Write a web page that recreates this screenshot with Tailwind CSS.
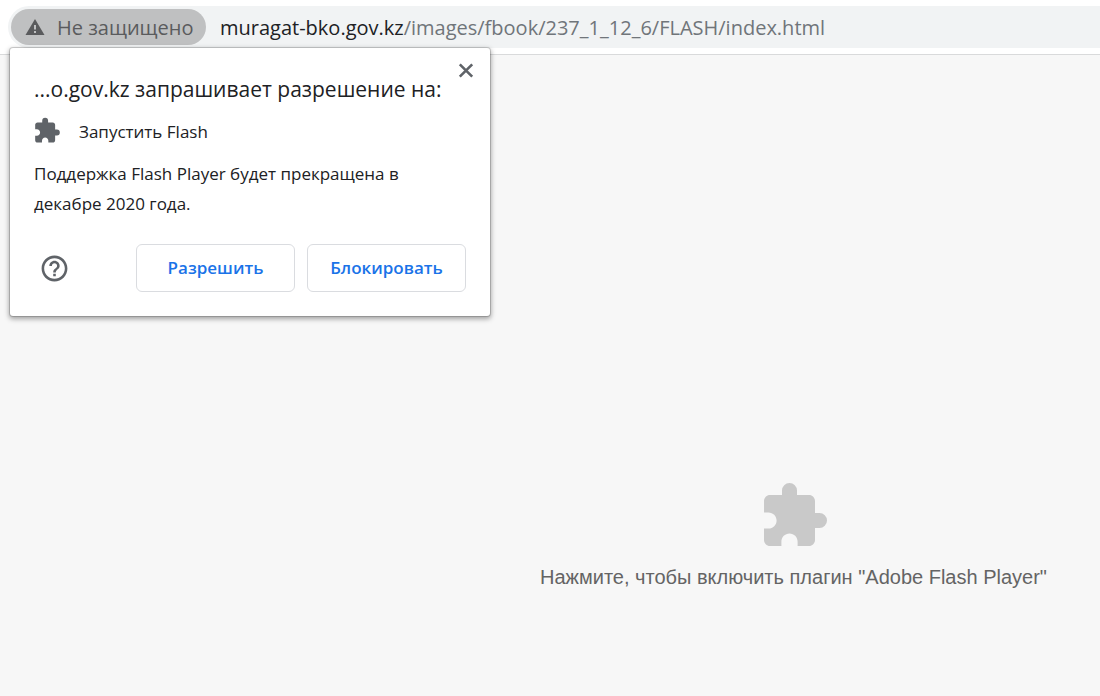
<!DOCTYPE html>
<html lang="ru">
<head>
  <meta charset="UTF-8">
  <meta name="viewport" content="width=device-width, initial-scale=1.0">
  <title>muragat-bko.gov.kz</title>
  <script src="https://cdn.jsdelivr.net/npm/@tailwindcss/browser@4"></script>
</head>
<body class="min-h-screen flex flex-col bg-[#f7f7f7] font-['Open_Sans','Noto_Sans',sans-serif] text-[#202124]">

  <!-- Address bar -->
  <header class="relative bg-white border-b border-[#d9dadb] pt-[6px] pb-[6px] pl-2">
    <div class="flex items-center h-[42px] pl-[3px] rounded-l-full bg-[#f1f3f4] text-[20px]">
      <button type="button" class="flex items-center gap-3 h-9 w-[195px] pt-0.5 pl-[14px] rounded-full bg-[#bfc0c1] text-[#5a5b5d] whitespace-nowrap">
        <svg class="w-5 h-5 shrink-0" viewBox="0 0 20 20" fill="currentColor" aria-hidden="true">
          <path fill-rule="evenodd" d="M10 1L19.500 17H0.500ZM9 7V11.500H11V7ZM9 13V15H11V13Z"/>
        </svg>
        Не защищено
      </button>
      <div role="textbox" aria-label="Адресная строка" class="pt-0.5 pl-[14px] whitespace-nowrap text-[#70757a]"><span class="text-[#202124]">muragat-bko.gov.kz</span>/images/fbook/237_1_12_6/FLASH/index.html</div>
    </div>

    <!-- Permission bubble -->
    <section role="dialog" aria-labelledby="bubbleTitle" class="absolute left-[10px] top-12 w-[480px] px-6 pt-6 pb-6 bg-white rounded-[3px] shadow-[0_0_0_1px_rgba(0,0,0,0.15),0_2px_5px_1px_rgba(0,0,0,0.35)]">
      <button type="button" aria-label="Закрыть" class="absolute right-4 top-[14px] text-[#5f6368]">
        <svg class="w-4 h-4" viewBox="0 0 16 16" fill="none" stroke="currentColor" stroke-width="2.600" aria-hidden="true">
          <path d="M1.800 2.300L14.200 14.700M14.200 2.300L1.800 14.700"/>
        </svg>
      </button>
      <h1 id="bubbleTitle" class="text-[21px] leading-[34px] whitespace-nowrap">...o.gov.kz запрашивает разрешение на:</h1>
      <div class="flex items-center gap-[18px] mt-[11px] text-[17px] leading-[30px]">
        <svg class="w-[27px] h-[27px] text-[#5f6368]" viewBox="1 2 23 23" overflow="visible" fill="currentColor" aria-hidden="true">
          <path d="M20.500 11H19V7c0-1.100-.9-2-2-2h-4V3.500a2.500 2.500 0 0 0-5 0V5H4c-1.100 0-1.990.9-1.990 2v3.800H3.500c1.490 0 2.700 1.210 2.700 2.700s-1.210 2.700-2.700 2.700H2V20c0 1.100.9 2 2 2h3.800v-1.500c0-1.490 1.210-2.700 2.700-2.700s2.700 1.210 2.700 2.700V22H17c1.100 0 2-.9 2-2v-4h1.500a2.500 2.500 0 0 0 0-5z"/>
        </svg>
        Запустить Flash
      </div>
      <p class="mt-3 pr-10 text-[17px] leading-[30px]">Поддержка Flash Player будет прекращена в декабре 2020 года.</p>
      <div class="flex items-center gap-3 mt-[25px] text-[17px] font-semibold text-[#1a73e8]">
        <button type="button" aria-label="Справка" class="ml-[5px] mr-auto text-[#5f6368]">
          <svg class="w-[31px] h-[31px]" viewBox="0 0 24 24" fill="currentColor" aria-hidden="true">
            <path d="M11 18h2v-2h-2v2zm1-16C6.480 2 2 6.480 2 12s4.480 10 10 10 10-4.480 10-10S17.520 2 12 2zm0 18c-4.410 0-8-3.590-8-8s3.590-8 8-8 8 3.590 8 8-3.590 8-8 8zm0-14c-2.210 0-4 1.790-4 4h2c0-1.100.9-2 2-2s2 .9 2 2c0 2-3 1.750-3 5h2c0-2.250 3-2.500 3-5 0-2.210-1.790-4-4-4z"/>
          </svg>
        </button>
        <button type="button" class="w-[159px] h-12 border border-[#dadce0] rounded-md">Разрешить</button>
        <button type="button" class="w-[159px] h-12 border border-[#dadce0] rounded-md">Блокировать</button>
      </div>
    </section>
  </header>

  <!-- Blocked plugin -->
  <main class="flex-1 flex flex-col items-center pt-[428px] pl-[487px]">
    <svg class="w-[66px] h-[66px] text-[#c9c9c9]" viewBox="1 1 22 22" fill="currentColor" aria-hidden="true">
      <path d="M20.500 11H19V7c0-1.100-.9-2-2-2h-4V3.500a2.500 2.500 0 0 0-5 0V5H4c-1.100 0-1.990.9-1.990 2v3.800H3.500c1.490 0 2.700 1.210 2.700 2.700s-1.210 2.700-2.700 2.700H2V20c0 1.100.9 2 2 2h3.800v-1.500c0-1.490 1.210-2.700 2.700-2.700s2.700 1.210 2.700 2.700V22H17c1.100 0 2-.9 2-2v-4h1.500a2.500 2.500 0 0 0 0-5z"/>
    </svg>
    <p class="mt-3 font-['Liberation_Sans',sans-serif] text-[20px] leading-8 text-[#646464] whitespace-nowrap">Нажмите, чтобы включить плагин "Adobe Flash Player"</p>
  </main>

</body>
</html>
